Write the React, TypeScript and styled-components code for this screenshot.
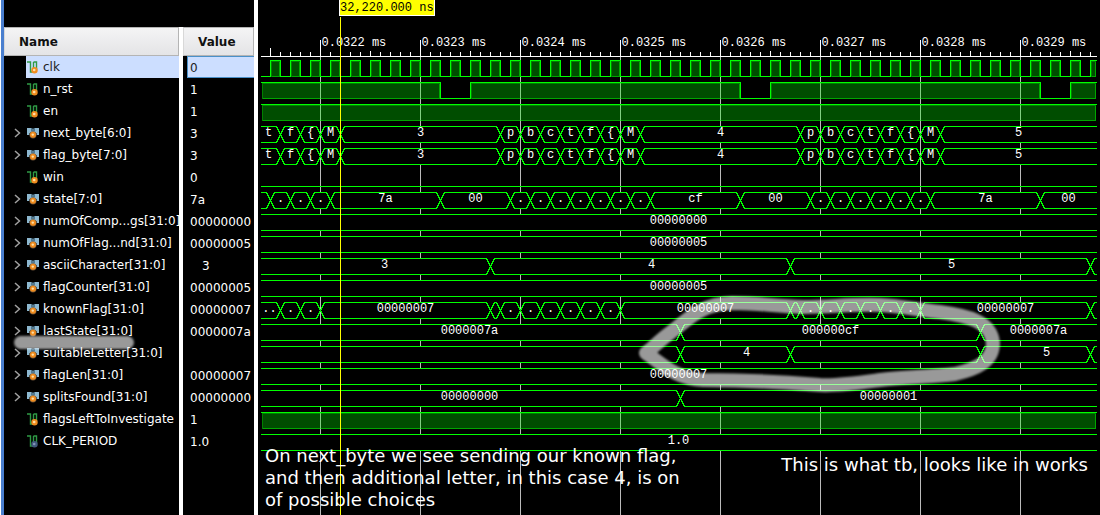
import React from "react";
import styled, { createGlobalStyle, css } from "styled-components";

const GlobalStyle = createGlobalStyle`
  * { box-sizing: border-box; }
  body { margin: 0; background: #000; }
`;

const ROW = 22;
const FIRST_ROW = 56;

/* ---------- signal data ---------- */

type Segment = [end: number, label?: string, shift?: number];
type Trace =
  | { type: "clock" }
  | { type: "bit"; lows: [number, number][] }
  | { type: "low" }
  | { type: "bus"; segments: Segment[] };

interface Signal {
  name: string;
  value: string;
  kind: "bit" | "bus" | "const";
  indent?: boolean;
  marked?: boolean;
  trace: Trace;
}

const END = 84;

const bytes: Segment[] = [
  [2, "t", -3], [4, "f"], [6, "{"], [8, "M"], [24, "3"],
  [26, "p"], [28, "b"], [30, "c"], [32, "t"], [34, "f"], [36, "{"], [38, "M"], [54, "4"],
  [56, "p"], [58, "b"], [60, "c"], [62, "t"], [64, "f"], [66, "{"], [68, "M"], [END, "5"],
];

const dots = (from: number, count: number): Segment[] =>
  Array.from({ length: count }, (_, i): Segment => [from + 2 * (i + 1), "."]);

const constant = (label: string): Trace => ({ type: "bus", segments: [[END, label, -1]] });

const signals: Signal[] = [
  { name: "clk", value: "0", kind: "bit", trace: { type: "clock" } },
  { name: "n_rst", value: "1", kind: "bit", trace: { type: "bit", lows: [[18, 21], [48, 51], [78, 81]] } },
  { name: "en", value: "1", kind: "bit", trace: { type: "bit", lows: [] } },
  { name: "next_byte[6:0]", value: "3", kind: "bus", trace: { type: "bus", segments: bytes } },
  { name: "flag_byte[7:0]", value: "3", kind: "bus", trace: { type: "bus", segments: bytes } },
  { name: "win", value: "0", kind: "bit", trace: { type: "low" } },
  {
    name: "state[7:0]", value: "7a", kind: "bus",
    trace: {
      type: "bus",
      segments: [
        [1], ...dots(1, 3), [18, "7a"], [25, "00"], ...dots(25, 7), [48, "cf"], [55, "00"],
        ...dots(55, 6), [78, "7a"], [END, "00"],
      ],
    },
  },
  { name: "numOfComp...gs[31:0]", value: "00000000", kind: "bus", trace: constant("00000000") },
  { name: "numOfFlag...nd[31:0]", value: "00000005", kind: "bus", trace: constant("00000005") },
  {
    name: "asciiCharacter[31:0]", value: "3", kind: "bus", indent: true,
    trace: { type: "bus", segments: [[23, "3", 8], [53, "4", 11], [83, "5", 11], [END]] },
  },
  { name: "flagCounter[31:0]", value: "00000005", kind: "bus", trace: constant("00000005") },
  {
    name: "knownFlag[31:0]", value: "00000007", kind: "bus",
    trace: {
      type: "bus",
      segments: [
        [2, "..", -2], ...dots(2, 2), [23, "00000007"], [24], ...dots(24, 6), [53, "00000007"],
        [54], ...dots(54, 6), [83, "00000007"], [END],
      ],
    },
  },
  {
    name: "lastState[31:0]", value: "0000007a", kind: "bus", marked: true,
    trace: { type: "bus", segments: [[42, "0000007a", -2], [72, "000000cf"], [END, "0000007a"]] },
  },
  {
    name: "suitableLetter[31:0]", value: "", kind: "bus",
    trace: { type: "bus", segments: [[42], [53, "4", 11], [72], [83, "5", 11], [END]] },
  },
  { name: "flagLen[31:0]", value: "00000007", kind: "bus", trace: constant("00000007") },
  {
    name: "splitsFound[31:0]", value: "00000000", kind: "bus",
    trace: { type: "bus", segments: [[42, "00000000", -2], [END, "00000001"]] },
  },
  { name: "flagsLeftToInvestigate", value: "1", kind: "bit", trace: { type: "bit", lows: [] } },
  { name: "CLK_PERIOD", value: "1.0", kind: "const", trace: constant("1.0") },
];

/* ---------- page parts ---------- */

const Page = styled.main`
  display: flex;
  min-height: 100vh;
  background: #000;
  color: #fff;
  font: 12px/22px "DejaVu Sans", sans-serif;
`;

const SignalPanel = styled.section`
  flex: none;
  width: 258px;
  padding-top: 27px;
  border-right: 4px solid #fff;
  border-left: 1px solid #fff;
  box-shadow: inset 3px 0 #4a7fcf;
  padding-left: 3px;
`;

const SignalTable = styled.table`
  width: 100%;
  height: calc(100vh - 27px);
  table-layout: fixed;
  border-collapse: separate;
  border-spacing: 0;
`;

const separator = css`
  border-right: 4px solid #fff;
`;

const HeadCell = styled.th<{ $wide?: boolean }>`
  width: ${(p) => (p.$wide ? "179px" : "auto")};
  height: 29px;
  padding: 0;
  text-align: left;
  ${(p) => p.$wide && separator}
`;

const HeadLabel = styled.div`
  height: 29px;
  padding-left: 14px;
  border: 1px solid #b4b4b4;
  border-left-color: #d8d8d8;
  background: linear-gradient(#f4f4f5, #e4e4e6);
  color: #111;
  font-weight: bold;
  line-height: 28px;
`;

const Cell = styled.td<{ $separated?: boolean; $spill?: boolean }>`
  height: ${ROW}px;
  padding: 0;
  overflow: ${(p) => (p.$spill ? "visible" : "hidden")};
  ${(p) => p.$separated && separator}
`;

const FillCell = styled.td<{ $separated?: boolean }>`
  padding: 0;
  ${(p) => p.$separated && separator}
`;

const NameLine = styled.div`
  position: relative;
  display: flex;
  height: ${ROW}px;
`;

const ToggleSlot = styled.div`
  flex: none;
  width: 22px;
`;

const Toggle = styled.button`
  display: flex;
  align-items: center;
  width: 22px;
  height: ${ROW}px;
  padding: 0 0 0 10px;
  border: 0;
  background: none;
  cursor: pointer;
`;

const NameLabel = styled.div<{ $selected: boolean }>`
  display: flex;
  flex: 1;
  align-items: center;
  gap: 4px;
  min-width: 0;
  padding-left: 1px;
  overflow: hidden;
  white-space: nowrap;
  line-height: 24px;
  background: ${(p) => (p.$selected ? "#ccdeff" : "none")};
  color: ${(p) => (p.$selected ? "#222" : "#fff")};

  svg {
    flex: none;
  }
`;

const Marker = styled.span`
  position: absolute;
  top: 16px;
  left: 10px;
  width: 120px;
  height: 13px;
  border-radius: 7px;
  background: #fff;
  opacity: 0.6;
  filter: blur(1px);
  pointer-events: none;
  z-index: 1;
`;

const ValueLabel = styled.div<{ $selected: boolean; $indent?: boolean }>`
  height: ${ROW}px;
  margin-left: 4px;
  padding-left: ${(p) => (p.$indent ? "14px" : "2px")};
  border: 1px solid ${(p) => (p.$selected ? "#4a90c8" : "transparent")};
  border-right: 0;
  overflow: hidden;
  line-height: 22px;
  background: ${(p) => (p.$selected ? "#ccdeff" : "none")};
  color: ${(p) => (p.$selected ? "#222" : "#fff")};
`;

const WavePane = styled.section`
  position: relative;
  flex: 1;
  min-width: 0;
  overflow: hidden;
`;

const WaveSvg = styled.svg`
  display: block;
  width: 100%;
  height: 100%;
  min-height: 460px;
  stroke-linecap: square;

  text {
    fill: #fff;
    font: 12px "Liberation Mono", monospace;
  }
`;

const CursorLabel = styled.div`
  position: absolute;
  top: 0;
  left: 81px;
  width: 96px;
  height: 16px;
  border: 1px solid #fff;
  border-top: 0;
  background: #ff0;
  color: #000;
  font: 12px/16px "Liberation Mono", monospace;
  white-space: nowrap;
`;

const Note = styled.p<{ $side: "left" | "right" }>`
  position: absolute;
  top: ${(p) => (p.$side === "left" ? "445px" : "454px")};
  ${(p) => (p.$side === "left" ? "left: 7px;" : "right: 12px;")}
  margin: 0;
  color: #fff;
  font-size: 18px;
  line-height: 22px;
  white-space: nowrap;
`;

/* ---------- icons ---------- */

const Chevron = () => (
  <svg width="7" height="10" viewBox="0 0 7 10" aria-hidden="true">
    <path d="M1 1l4.5 4L1 9" fill="none" stroke="#a0a0a0" strokeWidth="1.5" />
  </svg>
);

const BitIcon = ({ ball, core }: { ball: string; core: string }) => (
  <svg width="12" height="13" viewBox="0 0 12 13" aria-hidden="true">
    <path d="M0 1h3.500v10H6M6.500 9V1M6.500 1h3V9" fill="none" stroke="#2f9a45" strokeWidth="1.400" />
    <circle cx="7.500" cy="9.200" r="3.200" fill={ball} />
    <circle cx="7.200" cy="9" r="1.300" fill={core} />
  </svg>
);

const BusIcon = () => (
  <svg width="12" height="12" viewBox="0 0 12 12" aria-hidden="true">
    <path d="M0 1h5l1 2 1-2h5v7H9.500V6h-7v2H0z" fill="#8db8d0" />
    <path d="M4 1h1l1 2 1-2h1v3H4z" fill="#51788f" />
    <circle cx="6" cy="7.800" r="3.600" fill="#6b5238" />
    <circle cx="6" cy="7.800" r="3" fill="#f08c1e" />
    <circle cx="5.800" cy="7.600" r="1.200" fill="#ffe0a8" />
  </svg>
);

const SignalIcon = ({ kind }: { kind: Signal["kind"] }) => {
  if (kind === "bus") return <BusIcon />;
  return kind === "const" ? (
    <BitIcon ball="#40587c" core="#8095b5" />
  ) : (
    <BitIcon ball="#f08c1e" core="#ffe0a8" />
  );
};

/* ---------- waveforms ---------- */

const LEFT = 3;
const RIGHT = 838;
const px = (t: number) => (t <= 0 ? LEFT : t >= END ? RIGHT : 2 + t * 10);

const Pulse = ({ from, to, high }: { from: number; to: number; high: number }) => (
  <rect
    x={from + 1}
    y={high + 1}
    width={to - from - 2}
    height={15}
    fill="#0f0"
    fillOpacity={0.3}
    stroke="#0f0"
    strokeOpacity={0.5}
  />
);

/* A level line with its high periods shaded, given as pairs of pulse edges. */
const Level = ({ pulses, high }: { pulses: [number, number][]; high: number }) => {
  const low = high + 16;
  let d = "";
  pulses.forEach(([a, b], i) => {
    if (i === 0) d = a > LEFT ? `M${LEFT} ${low}H${a}V${high}` : `M${a} ${high}`;
    else d += `H${a}V${high}`;
    d += `H${b}`;
    if (b < RIGHT) d += `V${low}`;
  });
  return (
    <>
      {pulses.map(([a, b]) => (
        <Pulse key={a} from={a} to={b} high={high} />
      ))}
      <path d={d} fill="none" stroke="#0f0" />
    </>
  );
};

const Bus = ({ segments, high }: { segments: Segment[]; high: number }) => {
  const low = high + 16;
  const mid = high + 8;
  return (
    <>
      {segments.map(([end, label, shift = 0], i) => {
        const a = px(i ? segments[i - 1][0] : 0);
        const b = px(end);
        const first = i === 0;
        const last = end === END;
        const la = first ? a : a + 4;
        const rb = last ? b : b - 4;
        const left = first ? "" : `L${a} ${mid}`;
        const right = last ? "" : `L${b} ${mid}`;
        return (
          <g key={end}>
            <path d={`M${la} ${high}H${rb}${right}L${rb} ${low}H${la}${left}Z`} fill="#000" />
            <path
              d={`M${first ? la : a} ${first ? high : mid}L${la} ${high}H${rb}${right}${last ? `M${rb} ${low}` : `L${rb} ${low}`}H${la}${left}`}
              fill="none"
              stroke="#0f0"
            />
            {label && (
              <text x={Math.round((a + b) / 2) + shift} y={high + 9} textAnchor="middle">
                {label}
              </text>
            )}
          </g>
        );
      })}
    </>
  );
};

const clockPulses: [number, number][] = Array.from({ length: 42 }, (_, i) => [
  px(1 + 2 * i),
  px(Math.min(2 + 2 * i, END)),
]);

const highPulses = (lows: [number, number][]): [number, number][] => {
  const edges = [0, ...lows.flat(), END];
  const out: [number, number][] = [];
  for (let i = 0; i < edges.length; i += 2) out.push([px(edges[i]), px(edges[i + 1])]);
  return out;
};

const TraceRow = ({ trace, index }: { trace: Trace; index: number }) => {
  const high = FIRST_ROW + ROW * index + 4;
  switch (trace.type) {
    case "clock":
      return <Level pulses={clockPulses} high={high} />;
    case "bit":
      return <Level pulses={highPulses(trace.lows)} high={high} />;
    case "low":
      return <path d={`M${LEFT} ${high + 16}H${RIGHT}`} stroke="#0f0" />;
    case "bus":
      return <Bus segments={trace.segments} high={high} />;
  }
};

const majors = Array.from({ length: 8 }, (_, i) => ({ t: 6 + 10 * i, label: `0.0${322 + i} ms` }));
const minors = Array.from({ length: 83 }, (_, i) => i + 1);

const Ruler = () => (
  <>
    {majors.map(({ t, label }) => (
      <g key={t}>
        <line x1={px(t)} x2={px(t)} y1={56} y2="100%" stroke="#bbb" />
        <line x1={px(t)} x2={px(t)} y1={40} y2={56} stroke="#fff" />
        <text x={px(t) + 1} y={45}>{label}</text>
      </g>
    ))}
    {minors.map((t) => (
      <line key={t} x1={px(t)} x2={px(t)} y1={t === 1 ? 48 : t % 10 === 1 ? 51 : 52} y2={56} stroke="#fff" />
    ))}
    <line x1={LEFT} x2={RIGHT} y1={56} y2={56} stroke="#fff" />
  </>
);

const Waveforms = () => (
  <WaveSvg role="img" aria-label="Signal waveforms">
    <defs>
      <filter id="soft" x="-5%" y="-10%" width="110%" height="120%">
        <feGaussianBlur stdDeviation="1.200" />
      </filter>
    </defs>
    <g transform="translate(.5 .5)" shapeRendering="crispEdges">
      <Ruler />
      {signals.map((s, i) => (
        <TraceRow key={s.name} trace={s.trace} index={i} />
      ))}
      <line x1={px(8)} x2={px(8)} y1={17} y2="100%" stroke="#ff0" />
    </g>
    <path
      d="M388 353C396 347 402 340 412 333C428 322 440 304 474 303C500 303 515 306 545 307C575 307 590 304 622 305C645 306 660 310 682 312C710 316 733 321 735 343C735 362 718 369 697 374C672 377 645 377 622 380C600 383 580 386 562 385C525 382 490 380 445 380C418 379 404 364 388 353Z"
      fill="none"
      stroke="#fff"
      strokeOpacity={0.6}
      strokeWidth={14}
      strokeLinejoin="round"
      filter="url(#soft)"
    />
  </WaveSvg>
);

export default function App() {
  return (
    <Page>
      <GlobalStyle />
      <SignalPanel>
        <SignalTable>
          <thead>
            <tr>
              <HeadCell $wide scope="col"><HeadLabel>Name</HeadLabel></HeadCell>
              <HeadCell scope="col"><HeadLabel>Value</HeadLabel></HeadCell>
            </tr>
          </thead>
          <tbody>
            {signals.map((s, i) => (
              <tr key={s.name}>
                <Cell $separated $spill={s.marked}>
                  <NameLine>
                    <ToggleSlot>
                      {s.kind === "bus" && (
                        <Toggle aria-label={`Expand ${s.name}`}><Chevron /></Toggle>
                      )}
                    </ToggleSlot>
                    <NameLabel $selected={i === 0}>
                      <SignalIcon kind={s.kind} />
                      {s.name}
                    </NameLabel>
                    {s.marked && <Marker />}
                  </NameLine>
                </Cell>
                <Cell>
                  <ValueLabel $selected={i === 0} $indent={s.indent}>{s.value}</ValueLabel>
                </Cell>
              </tr>
            ))}
            <tr aria-hidden="true">
              <FillCell $separated />
              <FillCell />
            </tr>
          </tbody>
        </SignalTable>
      </SignalPanel>
      <WavePane>
        <Waveforms />
        <CursorLabel>32,220.000 ns</CursorLabel>
        <Note $side="left">
          On next_byte we see sending our known flag,<br />
          and then additional letter, in this case 4, is on<br />
          of possible choices
        </Note>
        <Note $side="right">This is what tb, looks like in works</Note>
      </WavePane>
    </Page>
  );
}
